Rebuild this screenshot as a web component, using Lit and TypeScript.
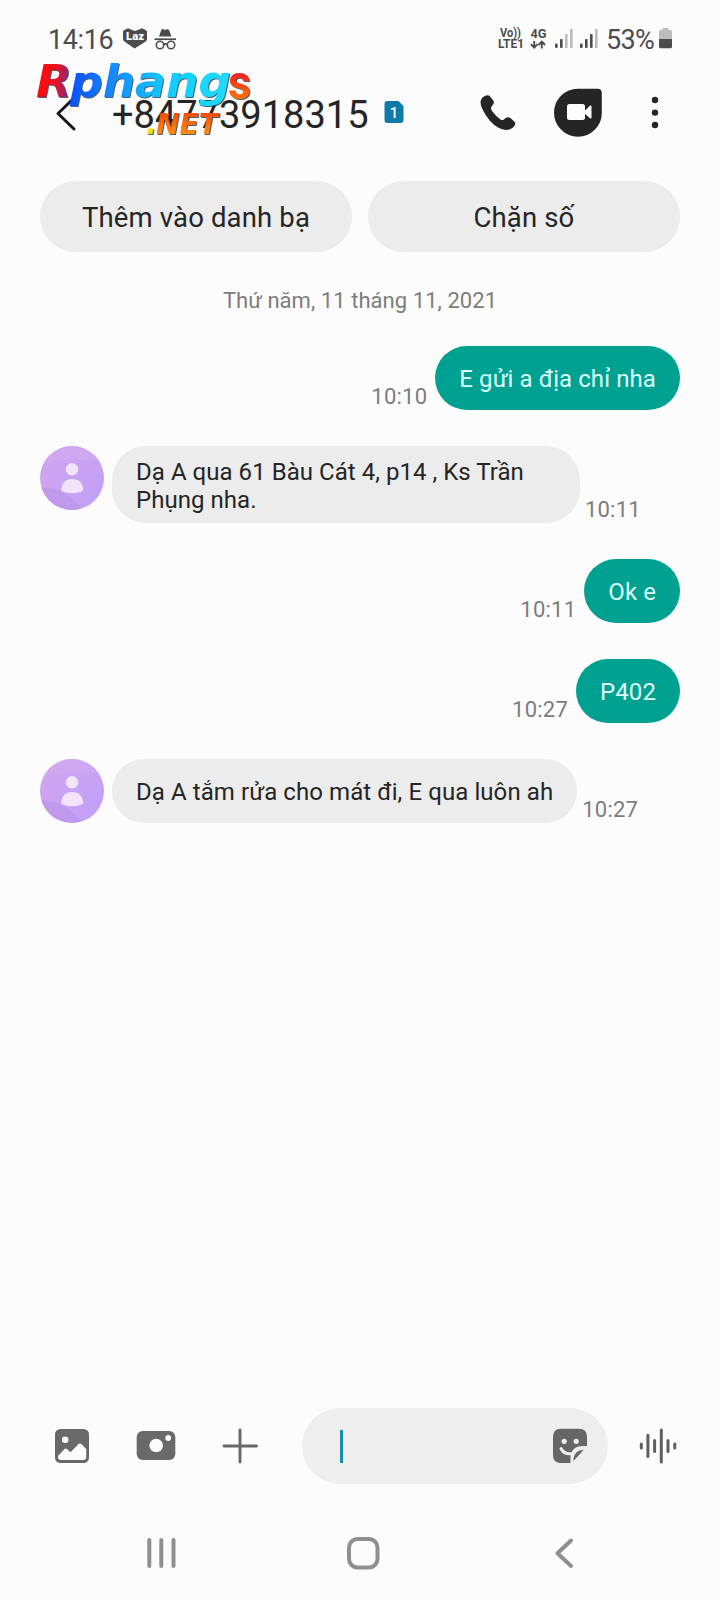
import { LitElement, html, svg, css } from "lit";
import { customElement, property } from "lit/decorators.js";

interface Message {
  from: "me" | "them";
  time: string;
  lines: string[];
}

const MESSAGES: Message[] = [
  { from: "me", time: "10:10", lines: ["E gửi a địa chỉ nha"] },
  { from: "them", time: "10:11", lines: ["Dạ A qua 61 Bàu Cát 4, p14 , Ks Trần", "Phụng nha."] },
  { from: "me", time: "10:11", lines: ["Ok e"] },
  { from: "me", time: "10:27", lines: ["P402"] },
  { from: "them", time: "10:27", lines: ["Dạ A tắm rửa cho mát đi, E qua luôn ah"] },
];

@customElement("status-bar")
class StatusBar extends LitElement {
  static styles = css`
    :host { display: flex; justify-content: space-between; height: 78px; padding: 0 47px 0 48px; box-sizing: border-box; color: #4c4c4c; }
    .side { display: flex; align-items: flex-start; }
    .text { font-size: 27px; line-height: 30px; margin-top: 25px; white-space: nowrap; }
    .time { width: 73px; letter-spacing: -0.4px; }
    .pct { width: 51px; letter-spacing: -0.7px; }
    svg { display: block; margin-top: 26px; }
    .tiny { font: 700 12px Roboto, sans-serif; }
  `;
  render() {
    return html`
      <div class="side">
        <span class="text time">14:16</span>
        <svg width="60" height="26" viewBox="121 26 60 26">
          <path d="M123 31.500Q123 30.500 124.500 30L128 28.300L135 31L142 28.300L145.500 30Q147 30.500 147 31.500V39Q147 41 145 42L134.600 48.500L125 42Q123 41 123 39Z" fill="#4c4c4c" />
          <text x="126" y="40.200" textLength="18" lengthAdjust="spacingAndGlyphs" font-family="Roboto, sans-serif" font-weight="900" font-size="11.500" fill="#fff">Laz</text>
          <path d="M159 36.500L161.300 30Q162 28.500 163.500 29.300L165.200 30L167 29.300Q168.500 28.700 169.200 30.200L171.500 36.500Z" fill="#4c4c4c" />
          <path d="M154.500 39.200H176" stroke="#4c4c4c" stroke-width="1.700" />
          <g fill="none" stroke="#4c4c4c" stroke-width="1.600"><circle cx="160" cy="45" r="3.700" /><circle cx="171" cy="45" r="3.700" /><path d="M163.700 44.500Q165.500 43.300 167.300 44.500" /></g>
        </svg>
      </div>
      <div class="side">
        <svg width="108" height="26" viewBox="498 26 108 26" fill="#4c4c4c">
          <text class="tiny" x="500" y="37" textLength="21" lengthAdjust="spacingAndGlyphs">Vo))</text>
          <text class="tiny" x="498" y="48.200" textLength="26" lengthAdjust="spacingAndGlyphs">LTE1</text>
          <text class="tiny" x="530.500" y="37.500" textLength="16" lengthAdjust="spacingAndGlyphs">4G</text>
          <path d="M530.900 44.200L534.200 47.600L537.500 44.200M534.200 41V47M541.800 48.500V43M538.500 45L541.800 41.600L545.100 45" fill="none" stroke="#4c4c4c" stroke-width="1.900" />
          <rect x="555" y="43.500" width="2.600" height="4.500" rx="1" /><rect x="560" y="39" width="2.600" height="9" rx="1" />
          <rect x="565" y="34" width="2.600" height="14" fill="#bcbcbc" /><rect x="570" y="29" width="2.600" height="19" fill="#bcbcbc" />
          <rect x="580" y="43.500" width="2.600" height="4.500" rx="1" /><rect x="585" y="39" width="2.600" height="9" rx="1" />
          <rect x="590" y="34" width="2.600" height="14" rx="1" /><rect x="595" y="29" width="2.600" height="19" fill="#bcbcbc" />
        </svg>
        <span class="text pct">53%</span>
        <svg width="16" height="26" viewBox="657 26 16 26">
          <path d="M662.500 28H668.500V30H670.500Q672 30 672 31.500V39H659V31.500Q659 30 660.500 30H662.500Z" fill="#bcbcbc" />
          <path d="M659 39H672V47Q672 48.300 670.500 48.300H660.500Q659 48.300 659 47Z" fill="#4c4c4c" />
        </svg>
      </div>
    `;
  }
}

@customElement("site-mark")
class SiteMark extends LitElement {
  static styles = css`
    :host { display: block; position: absolute; left: 30px; top: 46px; }
    svg { display: block; filter: drop-shadow(1px 1.5px 0.5px rgba(20, 40, 60, 0.75)); }
    .word { font: italic 700 45px "DejaVu Sans", sans-serif; }
    .net { font: italic 700 29px "DejaVu Sans", sans-serif; }
    .tail { font: 700 49px Roboto, sans-serif; }
  `;
  render() {
    return html`<svg width="226" height="106" viewBox="30 46 226 106">
      <defs>
        <linearGradient id="red" x1="36" y1="80" x2="70" y2="84" gradientUnits="userSpaceOnUse"><stop offset="0" stop-color="#ff0a0a" /><stop offset=".55" stop-color="#ee1020" /><stop offset="1" stop-color="#7c2a86" /></linearGradient>
        <linearGradient id="blue" x1="68" y1="0" x2="232" y2="0" gradientUnits="userSpaceOnUse"><stop offset="0" stop-color="#0a4cff" /><stop offset=".3" stop-color="#1590ff" /><stop offset=".6" stop-color="#10ccff" /><stop offset="1" stop-color="#20dcff" /></linearGradient>
        <linearGradient id="tail" x1="0" y1="74" x2="0" y2="100" gradientUnits="userSpaceOnUse"><stop offset="0" stop-color="#ee2222" /><stop offset="1" stop-color="#ff7a00" /></linearGradient>
        <linearGradient id="net" x1="0" y1="112" x2="0" y2="134" gradientUnits="userSpaceOnUse"><stop offset="0" stop-color="#f04a10" /><stop offset="1" stop-color="#ff8c10" /></linearGradient>
      </defs>
      <text class="word" x="36" y="97" textLength="36" lengthAdjust="spacingAndGlyphs" fill="url(#red)">R</text>
      <text class="word" x="70" y="97" textLength="161" lengthAdjust="spacingAndGlyphs" fill="url(#blue)">phang</text>
      <text class="tail" x="228" y="99" textLength="23" lengthAdjust="spacingAndGlyphs" fill="url(#tail)">s</text>
      <text class="net" x="146" y="133.500" fill="#f5dc10">.</text>
      <text class="net" x="156" y="133.500" textLength="62" lengthAdjust="spacingAndGlyphs" fill="url(#net)">NET</text>
    </svg>`;
  }
}

@customElement("chat-header")
class ChatHeader extends LitElement {
  static styles = css`
    :host { display: flex; align-items: center; height: 70px; padding-left: 52px; }
    svg { display: block; flex: none; }
    .back { margin-right: 32px; }
    .number { width: 270px; font-size: 38px; line-height: 46px; color: #252525; white-space: nowrap; margin-top: 3px; }
    .sim { margin-right: 71px; margin-bottom: 2px; }
    .call { margin-right: 34px; }
    .meet { margin-right: 42px; }
  `;
  render() {
    return html`
      <svg class="back" width="28" height="40" viewBox="52 93 28 40"><path d="M74 98L58 113.500L74 129" fill="none" stroke="#151515" stroke-width="3" stroke-linecap="round" stroke-linejoin="round" /></svg>
      <span class="number">+84773918315</span>
      <svg class="sim" width="24" height="26" viewBox="382 99 24 26">
        <path d="M387 101H398.500L403.500 106V120Q403.500 123 400.500 123H387.500Q384.500 123 384.500 120V104Q384.500 101 387.500 101Z" fill="#0e7aa8" />
        <text x="389.800" y="117.500" font-size="15" font-weight="500" fill="#fff">1</text>
      </svg>
      <svg class="call" width="42" height="42" viewBox="477 92 42 42"><path d="M482.500 97.500Q486.500 94.200 489.500 95.800L493.300 100.600Q494.800 103 492.300 105.500Q490 108 492 111Q496 116.500 500.500 119.500Q503 121 505 118.500Q507.500 116.300 510 117.800L514.800 122Q516.300 124.500 513 127.500Q509 131 503 129.500Q493 126.500 486 115.500Q480.500 107 480.500 102Q480.700 99 482.500 97.500Z" fill="#252525" /></svg>
      <svg class="meet" width="50" height="50" viewBox="553 88 50 50">
        <path d="M578 88.700H597.500Q601.800 88.700 601.800 93V113Q601.800 122.500 595 129.500Q588 136.700 578 136.700Q568 136.700 561 129.500Q554 122.500 554 112.700Q554 102.500 561 95.700Q568 88.700 578 88.700Z" fill="#252525" />
        <rect x="567" y="104" width="18" height="16" rx="2.500" fill="#fff" /><path d="M584.500 111L590 105.700Q591.500 104.800 591.500 106.500V117.500Q591.500 119.300 590 118.200L584.500 113.500Z" fill="#fff" />
      </svg>
      <svg width="20" height="36" viewBox="645 95 20 36" fill="#252525"><circle cx="655" cy="100" r="3.200" /><circle cx="655" cy="112.600" r="3.200" /><circle cx="655" cy="125" r="3.200" /></svg>
    `;
  }
}

@customElement("contact-avatar")
class ContactAvatar extends LitElement {
  static styles = css`:host { display: block; flex: none; } svg { display: block; }`;
  render() {
    return html`<svg width="64" height="64" viewBox="0 0 64 64">
      <defs>
        <linearGradient id="g" x1="0" y1=".2" x2="1" y2=".6"><stop offset="0" stop-color="#cfa5ee" /><stop offset="1" stop-color="#c3a0f8" /></linearGradient>
        <clipPath id="c"><circle cx="32" cy="32" r="32" /></clipPath>
      </defs>
      <g clip-path="url(#c)">
        <rect width="64" height="64" fill="url(#g)" />
        <path d="M0 0H48Q56 6 60 15Q30 12 0 17Z" fill="#d7adf0" opacity=".45" />
        <path d="M0 41Q27 42 42 64H0Z" fill="#b992e8" opacity=".6" />
      </g>
      <g fill="#f2e4fb"><circle cx="32" cy="23.300" r="6.200" /><path d="M21.300 44.500Q21.800 33 32.200 33Q42.600 33 43.200 44.500Q39 47.200 32.200 47.200Q25.500 47.200 21.300 44.500Z" /></g>
    </svg>`;
  }
}

@customElement("chat-message")
class ChatMessage extends LitElement {
  @property({ attribute: false }) message!: Message;
  static styles = css`
    :host { display: block; }
    .row { display: flex; align-items: flex-end; }
    .me { flex-direction: row-reverse; }
    .avatar { align-self: flex-start; margin-right: 8px; }
    .bubble { box-sizing: border-box; border-radius: 32px; padding: 19px 24px 17px; font-size: 24px; line-height: 28px; letter-spacing: 0.08px; color: #252525; background: #ececec; white-space: pre; }
    .me .bubble { background: #00a190; color: #dcfffa; }
    .two { padding: 12px 56px 9px 24px; border-radius: 34px; letter-spacing: 0.04px; }
    .time { font-size: 22px; line-height: 26px; color: #7c7c7c; letter-spacing: 0.25px; margin: 0 8px 0 5px; }
  `;
  render() {
    const m = this.message;
    return html`<div class="row ${m.from}">
      ${m.from === "them" ? html`<contact-avatar class="avatar"></contact-avatar>` : ""}
      <div class="bubble ${m.lines.length > 1 ? "two" : ""}">${m.lines.map((l) => html`<div>${l}</div>`)}</div>
      <span class="time">${m.time}</span>
    </div>`;
  }
}

@customElement("message-composer")
class MessageComposer extends LitElement {
  static styles = css`
    :host { display: flex; align-items: center; height: 76px; padding-left: 52px; }
    svg { display: block; flex: none; }
    .gallery { margin-right: 43px; }
    .camera { margin-right: 43px; }
    .plus { margin-right: 42px; }
    .field { display: flex; align-items: center; justify-content: space-between; box-sizing: border-box; width: 306px; height: 76px; border-radius: 38px; background: #eee; padding: 0 19px 0 38px; margin-right: 27px; }
    .caret { width: 3px; height: 33px; background: #1a8cb0; }
  `;
  render() {
    const bars: [number, number, number][] = [[641.3, 1442.5, 1449.5], [647.9, 1433.7, 1458], [654.6, 1439, 1453], [661.3, 1428.5, 1463.5], [668, 1439, 1453], [674.8, 1442.5, 1449.5]];
    return html`
      <svg class="gallery" width="40" height="40" viewBox="52 1426 40 40">
        <rect x="55" y="1429" width="34" height="34" rx="5.500" fill="#696969" /><circle cx="65.200" cy="1439.800" r="3.300" fill="#fcfcfc" />
        <path d="M58 1456L64.500 1449Q66 1448 67.500 1449.500L70.500 1452.300L78.500 1444Q80 1443 81.500 1444.300L86.200 1449V1457Q86.200 1460 83.200 1460H61Q58 1460 58 1457Z" fill="#fcfcfc" />
      </svg>
      <svg class="camera" width="42" height="40" viewBox="135 1426 42 40">
        <rect x="136.700" y="1431" width="38.600" height="29" rx="6" fill="#696969" /><circle cx="156.200" cy="1445.500" r="6.800" fill="#fcfcfc" /><circle cx="168.200" cy="1438" r="2.900" fill="#fcfcfc" />
      </svg>
      <svg class="plus" width="40" height="40" viewBox="220 1426 40 40"><path d="M240 1430V1462M224 1446H256.500" stroke="#696969" stroke-width="2.900" stroke-linecap="round" /></svg>
      <div class="field">
        <span class="caret"></span>
        <svg width="38" height="38" viewBox="551 1427 38 38">
          <path d="M561 1428.700H579Q587 1428.700 587 1436.700V1446H583Q570.500 1446 570.500 1458.500V1463H561Q553 1463 553 1455V1436.700Q553 1428.700 561 1428.700Z" fill="#666" />
          <path d="M573.500 1461V1458.500Q574.500 1450.500 583.800 1449.700Z" fill="#666" />
          <circle cx="564.200" cy="1441.300" r="2.600" fill="#eee" /><circle cx="576.200" cy="1441.300" r="2.600" fill="#eee" />
          <path d="M561 1448.500Q564 1454.700 572 1453.700" fill="none" stroke="#eee" stroke-width="3" stroke-linecap="round" />
        </svg>
      </div>
      <svg width="46" height="40" viewBox="635 1426 46 40"><g stroke="#5f5f5f" stroke-width="3" stroke-linecap="round">${bars.map(([x, a, b]) => svg`<path d="M${x} ${a + 1.5}V${b - 1.5}" />`)}</g></svg>
    `;
  }
}

@customElement("nav-bar")
class NavBar extends LitElement {
  static styles = css`
    :host { display: flex; justify-content: space-between; padding: 0 141px 0 142px; }
    svg { display: block; }
  `;
  render() {
    return html`
      <svg width="40" height="40" viewBox="142 1533 40 40"><path d="M149.300 1540V1566M161.300 1540V1566M173.500 1540V1566" stroke="#8f8f8f" stroke-width="4" stroke-linecap="round" /></svg>
      <svg width="40" height="40" viewBox="340.500 1533 40 40"><rect x="348.500" y="1539" width="28.500" height="28.500" rx="8.500" fill="none" stroke="#8f8f8f" stroke-width="4" /></svg>
      <svg width="40" height="40" viewBox="539 1533 40 40"><path d="M571 1540.500L557.500 1553.300L571 1566" fill="none" stroke="#8f8f8f" stroke-width="4" stroke-linecap="round" stroke-linejoin="round" /></svg>
    `;
  }
}

@customElement("app-root")
class AppRoot extends LitElement {
  static styles = css`
    :host { display: flex; flex-direction: column; position: relative; box-sizing: border-box; width: 720px; height: 1600px; overflow: hidden; background: #fcfcfc; font-family: Roboto, "Noto Sans", sans-serif; }
    .actions { display: grid; grid-template-columns: 1fr 1fr; gap: 16px; padding: 33px 40px 0; }
    .action { height: 71px; border-radius: 36px; background: #ececec; color: #252525; font-size: 27.500px; letter-spacing: 0.15px; line-height: 73px; text-align: center; }
    .date { margin-top: 36px; line-height: 26px; text-align: center; font-size: 22px; letter-spacing: 0.05px; color: #7c7c7c; }
    .thread { display: flex; flex-direction: column; gap: 36px; padding: 32px 40px 0; flex: 1; }
    .nav { margin: 49px 0 27px; }
  `;
  render() {
    return html`
      <status-bar></status-bar>
      <chat-header></chat-header>
      <div class="actions"><div class="action">Thêm vào danh bạ</div><div class="action">Chặn số</div></div>
      <div class="date">Thứ năm, 11 tháng 11, 2021</div>
      <div class="thread">${MESSAGES.map((m) => html`<chat-message .message=${m}></chat-message>`)}</div>
      <message-composer></message-composer>
      <nav-bar class="nav"></nav-bar>
      <site-mark></site-mark>
    `;
  }
}
